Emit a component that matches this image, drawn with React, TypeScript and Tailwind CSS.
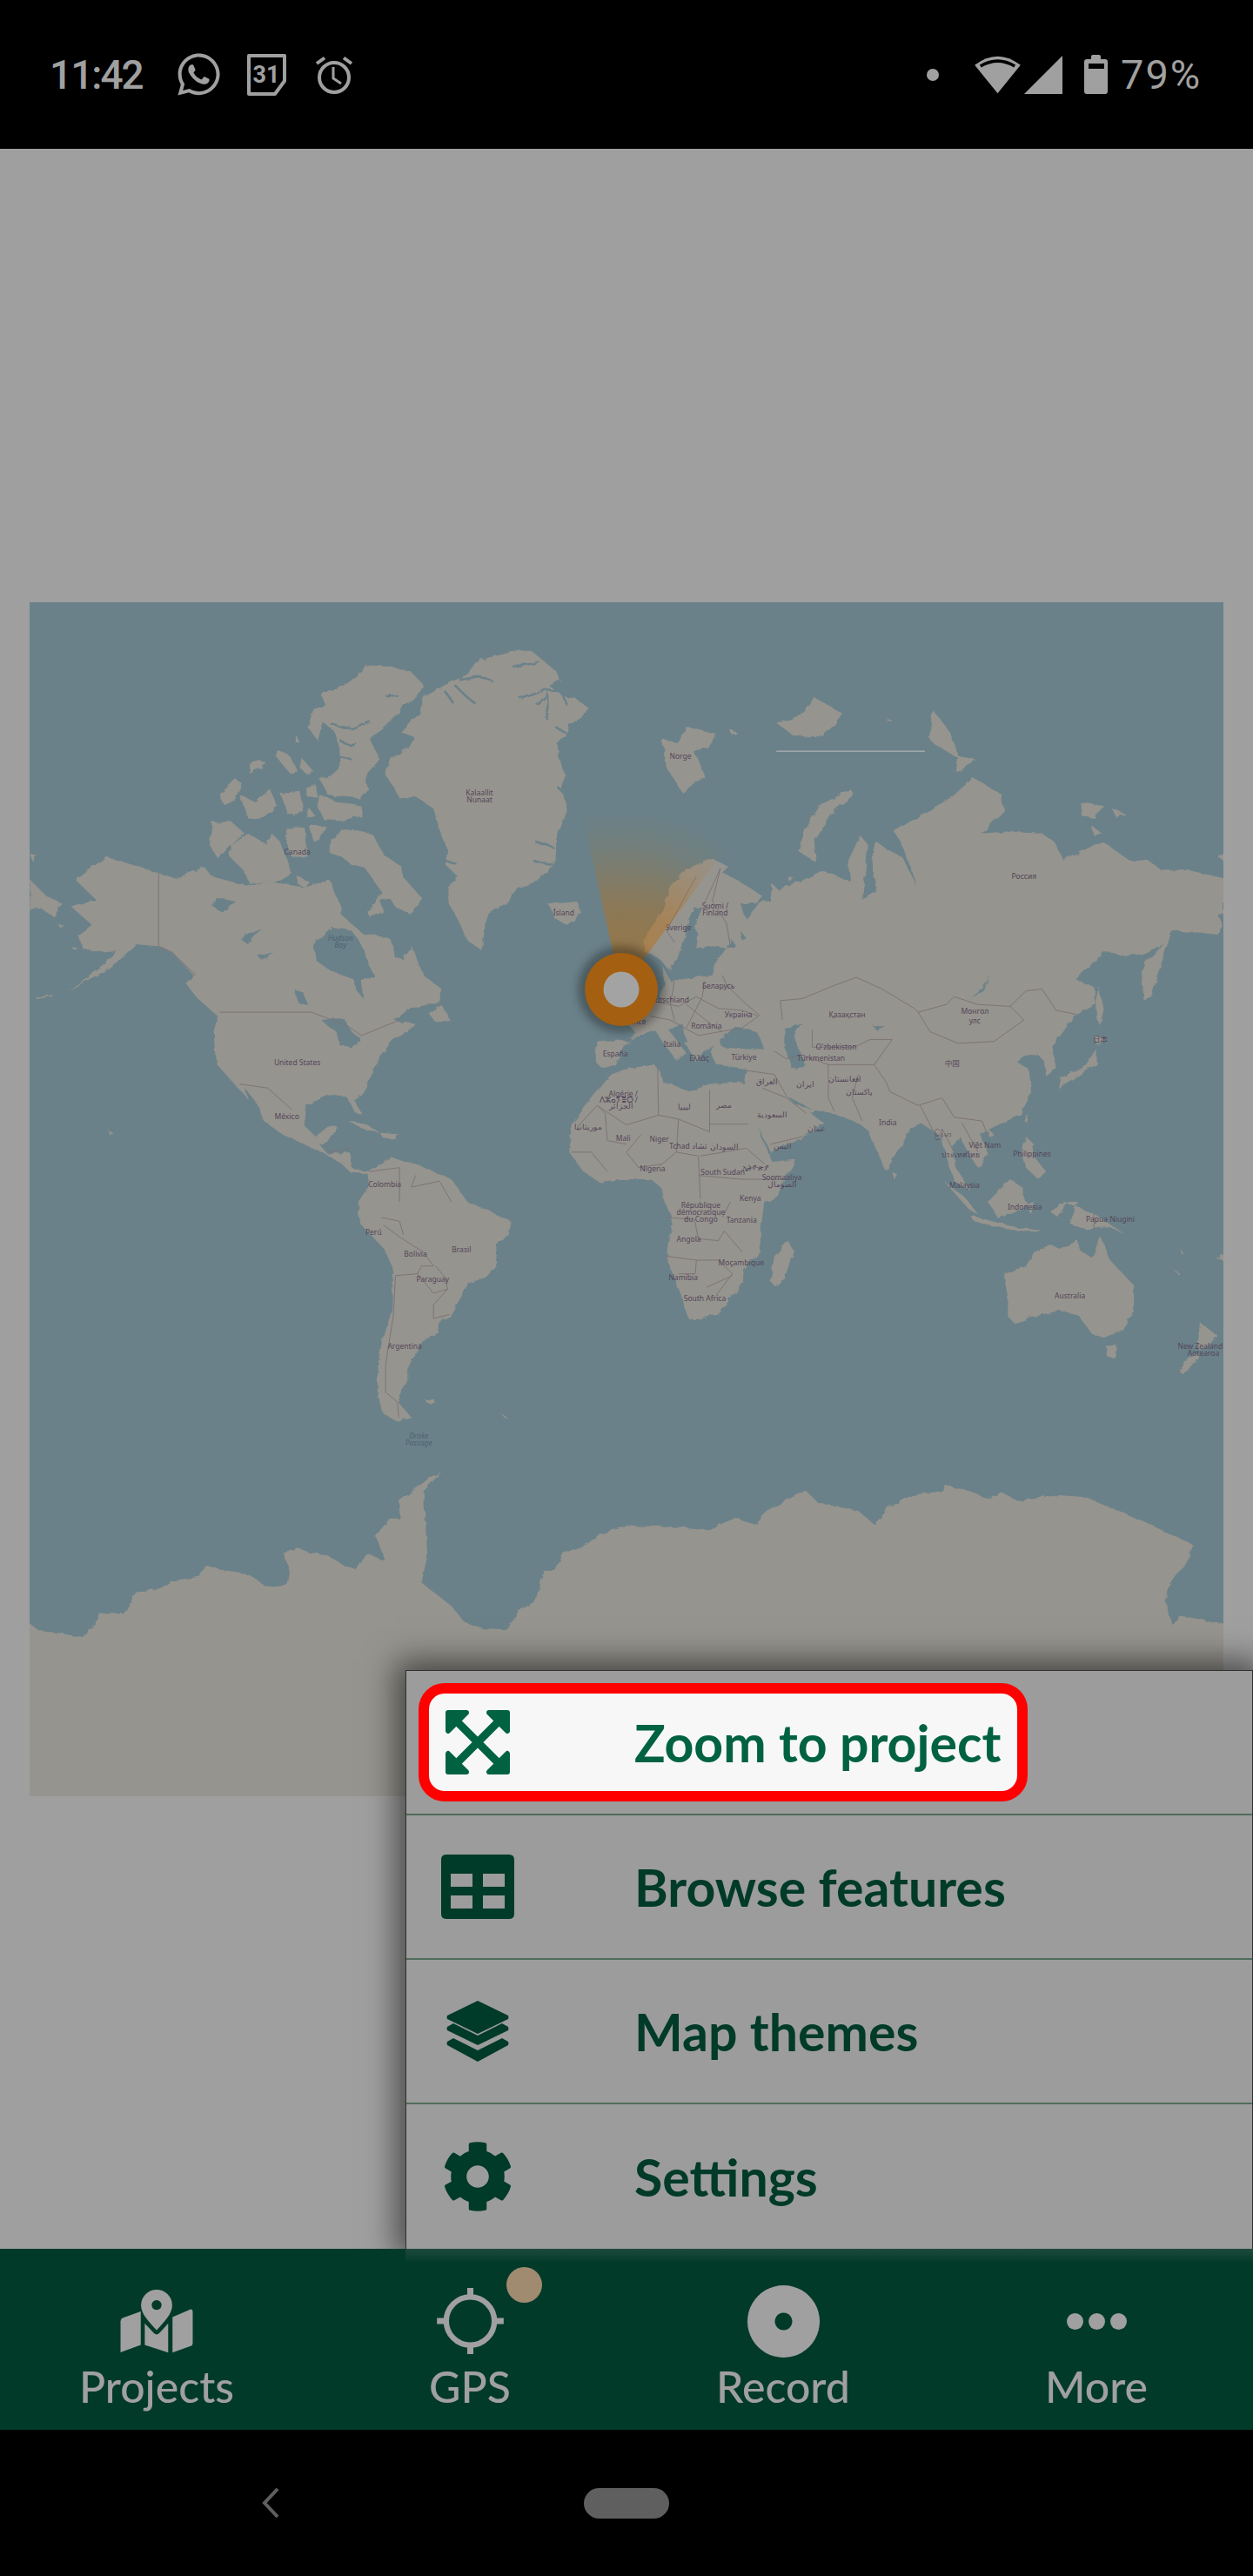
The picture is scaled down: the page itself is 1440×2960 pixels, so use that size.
import React from "react";
import { FaWhatsapp, FaCog } from "react-icons/fa";

type Q = "a" | "b" | "c" | "d";
const ORIGIN: Record<Q, [number, number]> = { a: [0, 680], b: [720, 680], c: [0, 1380], d: [720, 1380] };
const tx = (q: Q, x: number) => ORIGIN[q][0] + x / 2.178 - 34;
const ty = (q: Q, y: number) => ORIGIN[q][1] + y / 2.24 - 691;
const pts = (q: Q, s: string) =>
  s.trim().split(/\s+/).map((p) => {
    const [x, y] = p.split(",").map(Number);
    return `${tx(q, x).toFixed(1)},${ty(q, y).toFixed(1)}`;
  }).join(" ");

const LAND: [Q, string][][] = [
  // Antarctica
  [["c", "75,1085 100,1105 150,1110 210,1122 255,1060 310,1060 340,1005 400,995 430,975 500,965 515,935 560,950 625,960 665,990 720,985 725,955 712,905 745,890 775,905 820,910 860,935 890,945 915,905 965,925 940,860 975,815 1000,815 1000,770 1045,735 1075,710 1105,695 1060,745 1065,830 1070,910 1055,980 1130,1040 1160,1080 1205,1098 1270,1100 1300,1050 1345,1020 1360,950 1390,950 1410,905 1470,880 1500,855 1568,835"], ["d", "100,835 200,845 270,815 320,830 350,795 415,760 450,745 480,775 580,795 620,830 660,785 715,755 790,745 800,730 860,745 905,765 935,745 980,770 1050,760 1080,755 1150,760 1220,790 1300,825 1360,855 1415,880 1405,930 1375,960 1355,990 1350,1030 1365,1090 1385,1065 1494,1085 1510,1085 1510,1600"], ["c", "40,1600 40,1085"]],
  // Greenland
  [["a", "1290,148 1330,150 1360,175 1395,205 1402,225 1375,240 1390,252 1420,270 1440,272 1472,295 1462,318 1425,340 1415,370 1395,390 1400,430 1415,470 1405,500 1420,560 1405,600 1390,640 1388,700 1340,745 1295,760 1270,795 1230,815 1215,860 1205,920 1170,895 1150,850 1125,800 1125,760 1145,730 1115,700 1120,660 1100,610 1085,555 1040,525 1000,530 985,500 965,470 975,430 1020,400 1035,370 1005,360 1050,310 1060,270 1110,240 1170,210 1190,180 1240,160"]],
  // Ellesmere & Devon
  [["a", "905,205 925,185 970,188 1030,205 1062,240 1050,265 1010,285 990,320 960,350 925,375 950,430 915,470 920,505 900,530 860,525 820,520 800,480 830,470 850,450 850,400 835,355 810,335 795,380 770,345 785,300 815,290 805,265 860,235"]],
  [["a", "800,520 850,540 905,550 905,575 860,588 810,585 795,545"]],
  // Baffin
  [["a", "825,650 855,610 900,610 935,625 960,675 1005,705 1012,735 1055,785 1045,810 1025,825 990,810 975,785 950,790 960,825 925,835 920,820 955,770 915,710 880,700 855,680 825,670"]],
  // Arctic archipelago
  [["a", "530,590 580,590 612,620 580,650 545,683 525,650"]],
  [["a", "580,650 620,620 670,650 680,620 700,640 730,720 690,745 625,750 610,715 575,680"]],
  [["a", "695,405 725,420 745,460 725,465 690,420"]], [["a", "755,425 780,455 770,470 750,450"]],
  [["a", "625,440 660,430 655,450 620,465"]], [["a", "550,520 590,480 605,490 590,530 560,545"]],
  [["a", "600,520 640,540 675,505 695,550 650,585 620,580"]], [["a", "700,515 750,510 760,565 720,570"]],
  [["a", "770,550 790,575 770,580"]], [["a", "720,610 760,600 770,680 730,680 715,640"]],
  [["a", "775,600 815,600 800,640 785,640"]], [["a", "740,365 750,385 740,385"]],
  [["a", "765,500 790,495 795,525 770,525"]], [["a", "740,725 775,745 765,760 745,750"]],
  // Americas
  [["a", "190,740 265,680 330,700 395,722 440,735 490,715 510,705 530,730 620,755 680,745 770,760 825,740 850,800 855,830 905,875 975,890 990,940 1010,945 1030,910 1060,985 1105,1020 1095,1060 1060,1060 1020,1075 985,1100 1000,1105 1040,1110 1030,1125 985,1150 945,1200 935,1240 905,1290 885,1305 905,1340 890,1340 870,1300 830,1290 765,1320 760,1370 790,1400 820,1375 845,1375 825,1410 800,1420 820,1445 875,1440 880,1480 925,1490 980,1455 1050,1475 1130,1510 1170,1568"], ["c", "1240,30 1278,50 1270,85 1245,115 1240,170 1215,195 1170,210 1160,235 1125,295 1095,310 1100,340 1060,355 1040,390 1020,430 1020,460 1000,490 1000,520 1030,555 1000,568 960,545 945,500 945,440 960,350 980,280 985,170 960,120 905,60 895,30 900,0"], ["a", "900,1568 925,1530 920,1495 875,1490 855,1470 815,1445 770,1425 700,1390 655,1355 610,1290 595,1275 540,1210 535,1130 545,1090 495,1045 465,1005 485,985 430,925 395,910 340,905 300,945 260,975 170,1025 260,960 290,920 250,925 205,915 195,880 230,855 180,810 240,790"]],
  [["a", "870,1360 920,1370 950,1390 920,1385"]], [["a", "950,1390 1000,1395 985,1405 955,1400"]],
  [["a", "1075,1085 1105,1060 1130,1105 1090,1105"]], [["a", "270,1382 282,1390 275,1397"]],
  [["a", "75,672 95,680 80,690"]], [["a", "75,738 115,780 155,800 135,835 100,810 75,820"]],
  [["a", "145,852 165,860 150,862"]], [["a", "180,912 195,915 185,920"]], [["a", "90,1043 130,1035 132,1039 92,1046"]],
  [["c", "1065,510 1085,505 1085,515 1070,518"]], [["c", "1255,545 1270,555 1262,555"]],
  // Iceland
  [["a", "1370,800 1395,800 1445,795 1455,825 1420,855 1390,840 1385,825"]],
  // Eurasia
  [["b", "-73,1155 -20,1150 10,1160 20,1130 0,1105 50,1075 85,1040 95,1005 90,960 110,1000 170,990 215,985 225,950 250,915 215,910 175,915 180,880 170,860 190,810 170,815 150,860 140,900 125,950 105,970 85,945 70,935 45,925 42,890 85,830 110,760 150,710 215,685 255,705 240,720 270,735 340,780 325,800 285,800 300,840 335,795 360,790 365,750 385,770 400,755 440,740 490,715 530,730 560,745 555,690 585,625 605,650 595,740 590,790 625,770 615,690 625,640 650,660 690,680 720,740 730,760 690,650 670,615 740,570 800,535 865,475 940,520 945,560 890,620 950,615 1040,620 1070,640 1095,690 1140,665 1190,640 1260,690 1300,685 1340,715 1410,715 1494,735 1494,825 1480,830 1494,860 1480,880 1430,875 1365,870 1345,935 1310,1040 1295,1050 1290,985 1300,950 1345,905 1290,930 1250,935 1195,925 1125,995 1170,1015 1175,1060 1120,1090 1090,1135 1065,1165 1075,1225 1050,1245 1045,1205 1030,1190 1000,1190 975,1205 1010,1230 1015,1285 985,1345 920,1375 885,1395 905,1445 880,1480 860,1450 835,1400 815,1425 825,1480 860,1540 820,1515 800,1450 790,1410 775,1390 735,1365 705,1385 650,1490 630,1445 605,1385 580,1365 515,1340 470,1330 462,1340 495,1365 440,1400 360,1440 335,1385 285,1300 295,1255 300,1225 225,1215 210,1180 220,1165 205,1170 175,1210 150,1165 110,1130 105,1125 135,1165 150,1185 125,1205 100,1170 70,1125 30,1140 -5,1170 -30,1215 -60,1225 -75,1210"]],
  // Africa
  [["a", "1490,1290 1530,1240"], ["b", "0,1225 70,1215 85,1235 90,1260 125,1270 160,1285 205,1265 290,1260 300,1295 355,1445 365,1465 425,1460 395,1510 375,1560 345,1568"], ["d", "335,80 335,130 295,170 290,205 260,250 230,290 160,305 150,290 135,240 100,140 105,100 115,40 95,0"], ["b", "85,1530 60,1510 40,1510 -20,1510"], ["a", "1500,1518 1460,1490 1425,1440 1430,1370"]],
  // Islands
  [["d", "405,100 418,125 395,200 375,220 360,205 370,140"]],
  [["d", "945,190 1000,165 1020,130 1060,110 1085,120 1130,100 1135,125 1165,145 1185,88 1210,150 1270,215 1270,280 1240,330 1195,350 1165,340 1130,290 1085,280 1040,290 970,312 955,295 955,250"]],
  [["d", "1200,370 1230,370 1220,405 1205,400"]],
  [["d", "1435,310 1480,345 1450,375 1430,380 1432,350"]], [["d", "1420,390 1435,395 1395,445 1382,435"]],
  [["d", "1090,0 1170,30 1250,85 1210,65 1150,70 1110,55 1130,0"]],
  [["b", "795,1515 850,1560 880,1600 860,1590 825,1550"]],
  [["b", "905,1568 960,1510 990,1530 1000,1568 990,1590 930,1610"]],
  [["d", "1000,0 1020,0 1010,30"]],
  [["d", "860,35 960,62 1040,75 1030,78 950,70 870,50"]],
  [["d", "1100,0 1060,25 1080,40 1095,20"]],
  [["b", "1000,1400 1020,1420 1015,1445 1050,1490 1030,1510 1000,1480 990,1440"]],
  [["b", "1170,1140 1200,1150 1180,1165"]], [["b", "1175,1175 1175,1215 1120,1250 1080,1275 1085,1250 1150,1215"]],
  [["b", "1180,1010 1195,1070 1185,1115 1175,1090"]], [["b", "1005,1340 1000,1365 995,1355"]],
  [["b", "905,1380 920,1395 905,1400"]], [["b", "665,1490 680,1500 670,1510"]],
  [["b", "90,380 130,385 150,345 225,365 205,400 170,410 200,480 170,490 140,515 100,450"]],
  [["b", "262,355 278,360 265,368"]],
  [["b", "375,335 430,320 470,270 540,310 520,340 490,370 420,370"]],
  [["b", "560,505 570,520 520,560 470,640 475,695 430,665 450,600 490,540"]],
  [["b", "770,305 810,360 830,420 875,430 825,460 830,425 770,390 755,370"]],
  [["b", "655,325 665,330 655,333"]], [["b", "400,728 415,730 405,742"]],
  [["b", "1135,540 1200,550 1170,580 1140,575"]], [["b", "1215,555 1250,570 1225,578"]], [["b", "1165,600 1190,620 1170,625"]],
  [["b", "1480,680 1494,672 1494,690"]],
  [["d", "1365,170 1385,185 1385,190"]], [["d", "1385,120 1395,135 1390,135"]], [["d", "1475,145 1494,135 1494,150"]],
];

const WATER: [Q, string][] = [
  ["a", "785,905 830,860 880,870 905,905 925,960 935,985 905,1000 912,1048 890,1020 885,995 830,975 790,945"],
  ["a", "805,1100 860,1095 880,1130 905,1150 880,1170 850,1165 842,1130 820,1115"],
  ["a", "1000,1095 1035,1075 1050,1085 1005,1110"],
  ["a", "610,1272 640,1310 660,1358 630,1335"],
  ["a", "540,785 590,795 560,825 530,805"], ["a", "600,890 655,865 620,905"], ["a", "645,935 685,925 655,945"],
  ["a", "735,1020 760,1030 770,1062 745,1055"],
  ["b", "235,1150 275,1115 330,1135 345,1175 290,1175 240,1170"],
  ["b", "395,1120 440,1110 420,1145 450,1220 415,1225 395,1170"],
  ["b", "400,1295 465,1330 420,1315"],
  ["b", "910,985 895,1025 860,1045 890,1020"],
  ["b", "612,1110 650,1118 625,1125"],
  ["b", "140,1110 105,1125 135,1165 150,1155"],
  ["b", "260,890 275,910 250,915"],
  ["b", "285,870 300,890 290,895"],
];

const FJORDS: [Q, string][] = [
  ["a", "1280,190 1320,185 1350,178"], ["a", "1140,240 1170,270 1190,285"], ["a", "1115,255 1135,285"], ["a", "1300,272 1360,250 1395,255"], ["a", "1345,290 1370,262 1372,330"],
  ["a", "1405,255 1420,290"], ["a", "1055,285 1040,310"], ["a", "1150,225 1200,215 1235,230"],
  ["a", "1390,345 1415,360"], ["a", "1395,500 1415,520"], ["a", "1340,640 1385,655"], ["a", "1335,690 1385,700"], ["a", "1115,690 1145,700"],
  ["a", "965,265 995,265"], ["a", "830,340 880,350 925,330"], ["a", "850,380 880,395 890,385"], ["a", "840,420 880,430"], ["a", "800,400 830,405"],
];

const BORDERS: [Q, string][] = [
  ["a", "397,722 397,910 430,925 490,985"], ["a", "550,1080 780,1080 870,1115 905,1140 1000,1100"], ["a", "600,1265 670,1275 730,1330"],
  ["a", "810,1420 830,1440 875,1430"], ["a", "1445,1375 1495,1320 1568,1370"], ["a", "1430,1440 1480,1440 1520,1490"], ["a", "1495,1320 1515,1340 1520,1410 1568,1420"],
  ["b", "0,1370 80,1345 130,1355 208,1388 208,1280"], ["b", "208,1368 305,1368"], ["b", "80,1345 78,1225"], ["b", "130,1355 125,1440 180,1450 185,1560"], ["b", "36,1395 0,1440 30,1480 90,1470 125,1440"], ["b", "185,1450 300,1430 345,1470"], ["b", "180,1500 290,1510 395,1510"],
  ["b", "60,1050 130,1065 175,1040 230,1070 290,1075 330,1090 290,1120 180,1140 110,1100 60,1090"], ["b", "195,1000 190,1040 150,1120"], ["b", "120,1000 110,1060 120,1100"], ["b", "150,1060 210,1110 240,1130"],
  ["b", "195,800 235,710 215,795 250,850 260,910"], ["b", "175,730 100,870 120,900"], ["b", "240,985 250,1010 290,1050 335,1090"],
  ["b", "385,1050 440,1045 510,1015 575,990 640,1020 720,1070 730,1080 800,1060 820,1040 880,1060 960,1065 1000,1025 1040,1020 1075,1075 1125,1085"],
  ["b", "385,1050 390,1100"], ["b", "730,1080 760,1130 830,1160 920,1155 995,1100 960,1065"], ["b", "465,1125 465,1170 570,1170 610,1150 665,1150 620,1215 650,1260 660,1285 730,1320 790,1300 820,1350 890,1360 905,1400"],
  ["b", "370,1180 400,1200 440,1190 505,1215 585,1215 620,1215"], ["b", "505,1215 505,1300 520,1335"], ["b", "580,1240 565,1300 590,1360"], ["b", "300,1230 370,1240 400,1295"], ["b", "340,1275 400,1300 450,1340"], ["b", "360,1420 440,1400"], ["b", "790,1380 820,1440"], ["b", "840,1365 880,1440"], ["b", "735,1320 770,1390"],
  ["c", "960,60 1000,90 1060,130 1085,165 1055,165 1045,185 990,190 985,290 965,420 965,490 995,515 998,555"], ["c", "1045,185 1085,235 1120,225 1085,265 1085,300 1125,290"], ["c", "1090,165 1115,195 1120,225"],
  ["a", "925,1490 1000,1480 1000,1568"], ["a", "1040,1500 1030,1530 1100,1515 1130,1568"], ["c", "955,40 1000,50 1010,85"],
  ["d", "100,40 170,45 180,95 230,100 245,75 290,130"], ["d", "100,140 175,150 230,150 265,185 225,240"], ["d", "175,150 172,185 130,185"], ["d", "200,220 265,190"], ["d", "1170,30 1170,70"], ["d", "240,40 260,0"],
];

const LABELS: [Q, number, number, string, boolean?][] = [
  ["a", 1200, 522, "Kalaallit"], ["a", 1200, 540, "Nunaat"], ["a", 744, 675, "Canada"], ["a", 852, 897, "Hudson", true], ["a", 852, 915, "Bay", true],
  ["a", 744, 1217, "United States"], ["a", 718, 1356, "México"], ["a", 963, 1530, "Colombia"], ["a", 1411, 830, "Ísland"], ["a", 1540, 1193, "España"],
  ["a", 1560, 1296, "Algérie /"], ["a", 1548, 1312, "ⴷⵣⴰⵢⴻⵔ /"], ["a", 1555, 1329, "الجزائر"], ["a", 1472, 1382, "موريتانيا"], ["a", 1560, 1412, "Mali"],
  ["b", 135, 427, "Norge"], ["b", 222, 814, "Suomi /"], ["b", 222, 832, "Finland"], ["b", 130, 870, "Sverige"], ["b", 230, 1019, "Беларусь"],
  ["b", 102, 1054, "Deutschland"], ["b", 280, 1092, "Україна"], ["b", 200, 1123, "România"], ["b", 114, 1170, "Italia"], ["b", 182, 1205, "Ελλάς"],
  ["b", 294, 1203, "Türkiye"], ["b", 20, 1110, "France"], ["b", 995, 737, "Россия"], ["b", 552, 1092, "Қазақстан"], ["b", 525, 1176, "O'zbekiston"],
  ["b", 487, 1204, "Türkmenistan"], ["b", 872, 1085, "Монгол"], ["b", 872, 1109, "улс"], ["b", 815, 1218, "中国"], ["b", 1186, 1155, "日本"],
  ["b", 352, 1265, "العراق"], ["b", 447, 1272, "ایران"], ["b", 546, 1258, "افغانستان"], ["b", 582, 1293, "پاکستان"], ["b", 654, 1370, "India"],
  ["b", 897, 1430, "Việt Nam"], ["b", 836, 1453, "ประเทศไทย"], ["b", 1015, 1452, "Philippines"], ["b", 846, 1532, "Malaysia"], ["b", 792, 1400, "မြန်မာ"],
  ["b", 145, 1331, "ليبيا"], ["b", 245, 1326, "مصر"], ["b", 365, 1351, "السعودية"], ["b", 475, 1386, "عمان"], ["b", 392, 1431, "اليمن"],
  ["b", 82, 1413, "Niger"], ["b", 155, 1431, "Tchad تشاد"], ["b", 246, 1433, "السودان"], ["b", 65, 1490, "Nigeria"], ["b", 241, 1499, "South Sudan"],
  ["b", 323, 1488, "ኢትዮጵያ"], ["b", 389, 1513, "Soomaaliya"], ["b", 389, 1531, "الصومال"], ["b", 310, 1566, "Kenya"],
  ["c", 935, 85, "Perú"], ["c", 1040, 140, "Bolivia"], ["c", 1155, 129, "Brasil"], ["c", 1083, 205, "Paraguay"], ["c", 1013, 378, "Argentina"],
  ["c", 1048, 610, "Drake", true], ["c", 1048, 628, "Passage", true],
  ["d", 186, 16, "République"], ["d", 186, 34, "démocratique"], ["d", 186, 52, "du Congo"], ["d", 288, 53, "Tanzania"], ["d", 156, 102, "Angola"],
  ["d", 287, 163, "Moçambique"], ["d", 142, 201, "Namibia"], ["d", 196, 255, "South Africa"], ["d", 997, 20, "Indonesia"], ["d", 1211, 52, "Papua Niugini"],
  ["d", 1110, 248, "Australia"], ["d", 1442, 378, "New Zealand /"], ["d", 1444, 396, "Aotearoa"],
];

function WorldMap() {
  const cx = 714 - 34;
  const cy = 1136 - 691;
  return (
    <svg viewBox="0 0 1372 1372" className="block h-[1372px] w-[1372px] bg-[#6a8189]">
      <defs>
        <filter id="rough" x="-5%" y="-5%" width="110%" height="110%" colorInterpolationFilters="sRGB">
          <feTurbulence type="fractalNoise" baseFrequency="0.09" numOctaves="3" seed="4" />
          <feDisplacementMap in="SourceGraphic" scale="6" />
        </filter>
        <filter id="soft"><feGaussianBlur stdDeviation="5" /></filter>
        <radialGradient id="cone" gradientUnits="userSpaceOnUse" cx={cx} cy={cy} r="206">
          <stop offset="0" stopColor="#b86e14" stopOpacity="0.62" />
          <stop offset="0.45" stopColor="#b86e14" stopOpacity="0.44" />
          <stop offset="0.8" stopColor="#b86e14" stopOpacity="0.12" />
          <stop offset="1" stopColor="#b86e14" stopOpacity="0" />
        </radialGradient>
      </defs>
      <g filter="url(#rough)">
        {LAND.map((parts, i) => (
          <polygon key={i} fill="#96948e" points={parts.map(([q, s]) => pts(q, s)).join(" ")} />
        ))}
        {WATER.map(([q, s], i) => (
          <polygon key={i} fill="#6a8189" points={pts(q, s)} />
        ))}
        <g fill="none" stroke="#6a8189" strokeWidth="2.5">
          {FJORDS.map(([q, s], i) => (
            <polyline key={i} points={pts(q, s)} />
          ))}
        </g>
      </g>
      <g fill="none" stroke="#7d7478" strokeWidth="1">
        {BORDERS.map(([q, s], i) => (
          <polyline key={i} points={pts(q, s)} />
        ))}
      </g>
      <line x1={tx("b", 375)} y1={ty("b", 408)} x2={tx("b", 747)} y2={ty("b", 408)} stroke="#b9bbbb" strokeWidth="1" />
      <g fontFamily="'Noto Sans', 'Noto Sans CJK SC', sans-serif" fontSize="8.5" textAnchor="middle">
        {LABELS.map(([q, x, y, t, sea], i) => (
          <text key={i} x={tx(q, x)} y={ty(q, y)} fill={sea ? "#4f6272" : "#54465a"} fontStyle={sea ? "italic" : "normal"}>
            {t}
          </text>
        ))}
      </g>
      <polygon fill="url(#cone)" points={`${cx},${cy} ${cx - 50},${cy - 225} ${cx - 10},${cy - 225} ${cx + 60},${cy - 215} ${cx + 126},${cy - 170}`} />
      <circle cx={cx} cy={cy} r="50" fill="#000000" fillOpacity="0.3" filter="url(#soft)" />
      <circle cx={cx} cy={cy} r="42" fill="#a45f10" />
      <circle cx={cx} cy={cy} r="20.5" fill="#a3a3a3" />
    </svg>
  );
}

function StatusBar() {
  return (
    <div className="flex h-[171px] shrink-0 items-center bg-black pl-[57px] text-[#a0a0a0]" style={{ fontFamily: "Roboto, sans-serif" }}>
      <span className="w-[147px] text-[46px] font-medium leading-none tracking-[-2px]">11:42</span>
      <FaWhatsapp className="h-[55px] w-[49px]" />
      <svg viewBox="0 0 47 48" className="ml-[30px] h-[48px] w-[47px]">
        <path d="M3 2 H44 V31 L33 46 H3 Z" fill="none" stroke="currentColor" strokeWidth="4" strokeLinejoin="round" />
        <text x="23" y="33" textAnchor="middle" fontSize="27" fontWeight="700" fontFamily="Roboto, sans-serif" fill="currentColor">31</text>
      </svg>
      <svg viewBox="0 0 44 44" className="ml-[32px] h-[44px] w-[44px]" fill="none" stroke="currentColor" strokeWidth="4">
        <circle cx="22" cy="25" r="17" />
        <path d="M2 9 L11 2.5 M42 9 L33 2.5" />
        <path d="M21 13 V26 L30 32" strokeWidth="3" />
      </svg>
      <div className="ml-[659px] h-[14px] w-[14px] rounded-full bg-[#a0a0a0]" />
      <svg viewBox="0 0 158 135" className="ml-[41px] h-[45px] w-[53px]">
        <path d="M79 133 L0 35 Q79 -25 158 35 Z" fill="#a0a0a0" />
        <path d="M20 39 Q79 4 138 39" fill="none" stroke="#000000" strokeWidth="11" />
      </svg>
      <svg viewBox="0 0 44 44" className="ml-[4px] h-[44px] w-[44px]">
        <path d="M0 44 L44 0 V44 Z" fill="#a0a0a0" />
      </svg>
      <svg viewBox="0 0 27 45" className="ml-[25px] h-[45px] w-[27px]">
        <path d="M8 5 V2 Q8 0 10 0 H17 Q19 0 19 2 V5 H24 Q27 5 27 8 V42 Q27 45 24 45 H3 Q0 45 0 42 V8 Q0 5 3 5 Z" fill="#a0a0a0" />
        <rect x="5" y="10" width="18" height="6" fill="#000000" />
      </svg>
      <span className="ml-[15px] text-[47px] leading-none tracking-[2px]">79%</span>
    </div>
  );
}

function ExpandIcon() {
  return (
    <svg viewBox="0 0 74 74" className="h-[74px] w-[74px]" fill="#006241" stroke="#006241" strokeLinejoin="round">
      <path d="M14 14 L60 60 M60 14 L14 60" strokeWidth="9" fill="none" />
      <path d="M3 3 H24 L3 24 Z M71 3 H50 L71 24 Z M3 71 H24 L3 50 Z M71 71 H50 L71 50 Z" strokeWidth="6" />
    </svg>
  );
}

function TableIcon() {
  return (
    <svg viewBox="0 0 84 74" className="h-[74px] w-[84px]" fill="#003a28">
      <path fillRule="evenodd" d="M6 0 H78 Q84 0 84 6 V68 Q84 74 78 74 H6 Q0 74 0 68 V6 Q0 0 6 0 Z M11 22 V37 H36 V22 Z M48 22 V37 H73 V22 Z M11 47 V62 H36 V47 Z M48 47 V62 H73 V47 Z" />
    </svg>
  );
}

function LayersIcon() {
  return (
    <svg viewBox="0 0 72 70" className="h-[70px] w-[72px]" fill="#003a28">
      <path d="M36 0 L71 17 Q72 19 71 21 L36 38 L1 21 Q0 19 1 17 Z" />
      <path d="M8 26 L36 40 L64 26 L71 30 Q72 32 71 34 L36 51 L1 34 Q0 32 1 30 Z" />
      <path d="M8 43 L36 57 L64 43 L71 47 Q72 49 71 51 L36 70 L1 51 Q0 49 1 47 Z" />
    </svg>
  );
}

function MenuRow({ icon, label, active, last }: { icon: React.ReactNode; label: string; active?: boolean; last?: boolean }) {
  return (
    <div className={`relative flex h-[166px] items-center ${last ? "" : "border-b-2 border-[#4f6d5a]"}`}>
      {active && <div className="absolute left-[14px] top-[14px] h-[136px] w-[700px] rounded-[30px] border-[12px] border-[#ff0000] bg-[#f7f7f7]" />}
      <div className="relative flex w-[164px] justify-center">{icon}</div>
      <span
        className={`relative ml-[98px] text-[59px] font-bold leading-none ${active ? "text-[#006241]" : "text-[#003a28]"}`}
        style={{ fontFamily: "Lato, sans-serif" }}
      >
        {label}
      </span>
    </div>
  );
}

function Menu() {
  return (
    <div className="absolute bottom-0 right-0 w-[974px] border-l border-t border-r border-[#2f2f2f] bg-[#9c9c9c] shadow-[0_0_34px_10px_rgba(0,0,0,0.55)]">
      <MenuRow active icon={<ExpandIcon />} label="Zoom to project" />
      <MenuRow icon={<TableIcon />} label="Browse features" />
      <MenuRow icon={<LayersIcon />} label="Map themes" />
      <MenuRow last icon={<FaCog className="h-[82px] w-[82px] text-[#003a28]" />} label="Settings" />
    </div>
  );
}

function NavItem({ icon, label, badge }: { icon: React.ReactNode; label: string; badge?: boolean }) {
  return (
    <div className="relative flex flex-col items-center pt-[41px]">
      {badge && <div className="absolute left-[222px] top-[21px] h-[41px] w-[41px] rounded-full bg-[#a08a70]" />}
      <div className="flex h-[84px] items-center justify-center">{icon}</div>
      <span className="mt-[5px] text-[50px] font-medium leading-[56px] text-[#a0a0a0]" style={{ fontFamily: "Lato, sans-serif" }}>
        {label}
      </span>
    </div>
  );
}

function BottomBar() {
  return (
    <div className="relative grid h-[208px] shrink-0 grid-cols-4 bg-[#023a2a]">
      <div className="absolute left-[466px] right-0 top-0 h-[16px] bg-gradient-to-b from-[#1d4a3e] to-[#023a2a]" />
      <NavItem
        label="Projects"
        icon={
          <svg viewBox="55 105 250 220" className="h-[73px] w-[84px]" fill="#a0a0a0">
            <path fillRule="evenodd" d="M180 105 a54 54 0 0 1 54 54 c0 30 -30 60 -54 86 c-24 -26 -54 -56 -54 -86 a54 54 0 0 1 54 -54 Z M180 141 a17 17 0 1 0 0.01 0 Z" />
            <path d="M125 180 L62 203 Q55 206 55 215 L55 322 L125 296 Z" />
            <path d="M139 222 L170 255 Q180 265 190 255 L220 222 L220 323 L139 296 Z" />
            <path d="M235 200 L298 173 Q305 173 305 182 L305 290 Q305 298 298 300 L235 323 Z" />
          </svg>
        }
      />
      <NavItem
        badge
        label="GPS"
        icon={
          <svg viewBox="1145 100 230 228" className="h-[76px] w-[77px]" fill="none" stroke="#a0a0a0">
            <circle cx="1260" cy="214" r="83" strokeWidth="19" />
            <path d="M1260 100 V130 M1260 298 V328 M1145 214 H1177 M1343 214 H1375" strokeWidth="21" />
          </svg>
        }
      />
      <NavItem
        label="Record"
        icon={
          <svg viewBox="0 0 83 83" className="h-[83px] w-[83px]">
            <path fillRule="evenodd" fill="#a0a0a0" d="M41.5 0 a41.5 41.5 0 1 0 0.01 0 Z M41.5 31.5 a10 10 0 1 1 -0.01 0 Z" />
          </svg>
        }
      />
      <NavItem
        label="More"
        icon={
          <div className="flex gap-[6px]">
            <div className="h-[19px] w-[19px] rounded-full bg-[#a0a0a0]" />
            <div className="h-[19px] w-[19px] rounded-full bg-[#a0a0a0]" />
            <div className="h-[19px] w-[19px] rounded-full bg-[#a0a0a0]" />
          </div>
        }
      />
    </div>
  );
}

function SystemNav() {
  return (
    <div className="flex h-[168px] shrink-0 items-center bg-black pl-[301px]">
      <svg viewBox="0 0 20 34" className="h-[34px] w-[20px]" fill="none" stroke="#5f5f5f" strokeWidth="4">
        <path d="M18 1 L3 17 L18 33" />
      </svg>
      <div className="ml-[350px] h-[35px] w-[98px] rounded-[18px] bg-[#5f5f5f]" />
    </div>
  );
}

export default function App() {
  return (
    <div className="flex h-[2960px] w-[1440px] flex-col overflow-hidden bg-[#9f9f9f]">
      <StatusBar />
      <main className="relative flex flex-1 items-center justify-center">
        <WorldMap />
        <Menu />
      </main>
      <BottomBar />
      <SystemNav />
    </div>
  );
}
